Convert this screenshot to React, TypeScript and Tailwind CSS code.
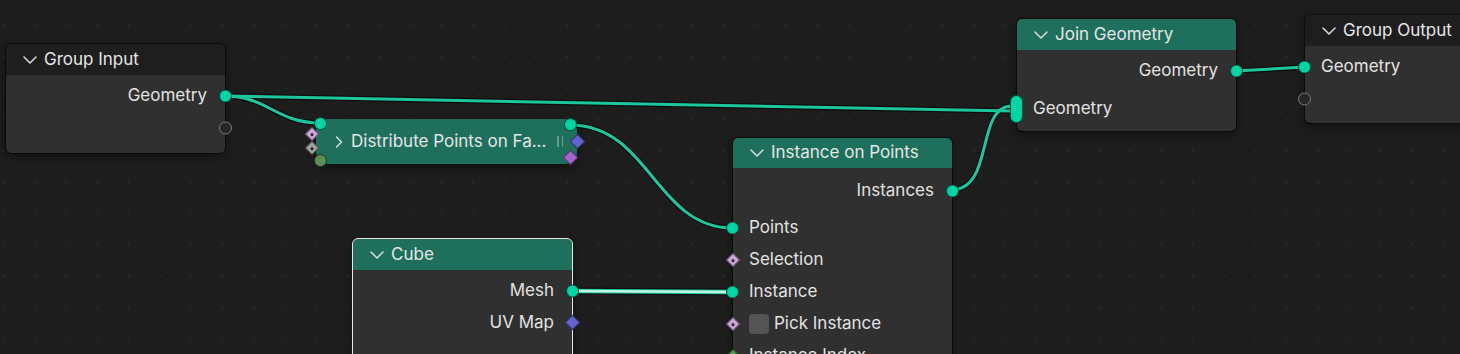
import type { ReactNode } from 'react';

const composeClasses = (...classes: Array<string | false | null | undefined>) => classes.filter(Boolean).join(' ');

const ChevronDown = () => (
  <svg width="14" height="8" viewBox="0 0 14 8" className="shrink-0">
    <path d="M1 1l6 6 6-6" fill="none" stroke="#dcdcdc" strokeWidth="1.5" strokeLinecap="round" strokeLinejoin="round" />
  </svg>
);

const ChevronRight = () => (
  <svg width="8" height="12" viewBox="0 0 8 12" className="shrink-0">
    <path d="M1.5 1l5 5-5 5" fill="none" stroke="#dcdcdc" strokeWidth="1.5" strokeLinecap="round" strokeLinejoin="round" />
  </svg>
);

const Header = ({ title, green }: { title: string; green?: boolean }) => (
  <div
    className={composeClasses(
      'flex h-[31px] items-center gap-[7px] rounded-t-[5px] pl-[17px] text-[17px] text-[#e6e6e6]',
      green ? 'bg-[#1e6f5c]' : 'bg-[#1e1e1e]'
    )}
  >
    <ChevronDown />
    <span>{title}</span>
  </div>
);

const Row = ({ children, right, className }: { children: ReactNode; right?: boolean; className?: string }) => (
  <div
    className={composeClasses(
      'relative flex h-[32px] items-center text-[17px] text-[#e2e2e2]',
      right ? 'justify-end pr-[18px]' : 'pl-[16px]',
      className
    )}
  >
    {children}
  </div>
);

// sockets sit on the node edge
const GeoIn = () => (
  <span className="absolute top-1/2 left-[-7px] h-[13px] w-[13px] -translate-y-1/2 rounded-full border border-black/60 bg-[#00d6a3]" />
);
const GeoOut = () => (
  <span className="absolute top-1/2 right-[-7px] h-[13px] w-[13px] -translate-y-1/2 rounded-full border border-black/60 bg-[#00d6a3]" />
);
const EmptyIn = () => (
  <span className="absolute top-1/2 left-[-7px] h-[13px] w-[13px] -translate-y-1/2 rounded-full border border-[#7c7c7c] bg-[#262626]" />
);
const EmptyOut = () => (
  <span className="absolute top-1/2 right-[-7px] h-[13px] w-[13px] -translate-y-1/2 rounded-full border border-[#7c7c7c] bg-[#262626]" />
);
const FieldIn = ({ color }: { color: string }) => (
  <span
    className={composeClasses(
      'absolute top-[11px] left-[-5px] flex h-[10px] w-[10px] rotate-45 items-center justify-center border border-black/50',
      color
    )}
  >
    <span className="h-[3px] w-[3px] rounded-full bg-black/80" />
  </span>
);

const Node = ({ className, children, selected }: { className: string; children: ReactNode; selected?: boolean }) => (
  <div
    className={composeClasses(
      'absolute w-[219px] rounded-[5px] bg-[#303030] shadow-[0_3px_8px_rgba(0,0,0,0.5)]',
      selected ? 'outline outline-1 outline-[#e8e8e8]' : 'outline outline-1 outline-black/50',
      className
    )}
  >
    {children}
  </div>
);

const linkPaths = [
  'M224 96 C 320 96 920 111 1012 111',
  'M224 96 C 268 96 276 123 320 123',
  'M570 125 C 650 125 655 228 733 228',
  'M951 190 C 995 190 975 106 1012 106',
  'M1235 71 L 1305 67',
];

const Links = () => (
  <svg className="absolute top-0 left-0" width="1460" height="354" viewBox="0 0 1460 354" fill="none">
    <g stroke="#000" strokeOpacity="0.55" strokeWidth="5.5" strokeLinecap="round">
      {linkPaths.map(d => (
        <path key={d} d={d} />
      ))}
      <path d="M571 291 L 733 292" strokeWidth="7" />
    </g>
    <g stroke="#1dc79d" strokeWidth="3" strokeLinecap="round">
      {linkPaths.map(d => (
        <path key={d} d={d} />
      ))}
      <path d="M571 291 L 733 292" strokeWidth="4.5" />
    </g>
    {/* highlighted link of the selected Cube node */}
    <path d="M571 291 L 733 292" stroke="#bff5e4" strokeWidth="2.5" strokeLinecap="round" />
  </svg>
);

const App = () => {
  return (
    <div className="relative h-[354px] w-[1460px] overflow-hidden bg-[#1d1d1d] bg-[radial-gradient(circle,#282828_1.1px,transparent_1.6px)] bg-[length:31.3px_31.3px] bg-[position:-12px_10px] font-['Inter',sans-serif] antialiased">
      <Links />

      <Node className="top-[44px] left-[6px]">
        <Header title="Group Input" />
        <div className="pt-[5px] pb-[9px]">
          <Row right>
            Geometry
            <GeoOut />
          </Row>
          <Row right>
            <EmptyOut />
          </Row>
        </div>
      </Node>

      {/* collapsed node */}
      <div className="absolute top-[119px] left-[316px] flex h-[45px] w-[261px] items-center rounded-[12px] bg-[#1e6f5c] pl-[19px] text-[17px] text-[#e6e6e6] shadow-[0_3px_8px_rgba(0,0,0,0.55)]">
        <ChevronRight />
        <span className="ml-[8px] whitespace-nowrap">Distribute Points on Fa...</span>
        <span className="mr-[14px] ml-auto flex gap-[3px]">
          <span className="h-[11px] w-[1.5px] bg-[#5f9e8d]" />
          <span className="h-[11px] w-[1.5px] bg-[#5f9e8d]" />
        </span>
        <span className="absolute top-[-2px] left-[-2px] h-[13px] w-[13px] rounded-full border border-black/60 bg-[#00d6a3]" />
        <span className="absolute top-[10px] left-[-9px] flex h-[10px] w-[10px] rotate-45 items-center justify-center border border-black/50 bg-[#cea6d8]">
          <span className="h-[3px] w-[3px] rounded-full bg-black/80" />
        </span>
        <span className="absolute top-[24px] left-[-9px] flex h-[10px] w-[10px] rotate-45 items-center justify-center border border-black/50 bg-[#a3a3a3]">
          <span className="h-[3px] w-[3px] rounded-full bg-black/80" />
        </span>
        <span className="absolute top-[35px] left-[-2px] h-[13px] w-[13px] rounded-full border border-black/60 bg-[#5a8f56]" />
        <span className="absolute top-[-1px] left-[248px] h-[13px] w-[13px] rounded-full border border-black/60 bg-[#00d6a3]" />
        <span className="absolute top-[17px] left-[256px] h-[11px] w-[11px] rotate-45 border border-black/50 bg-[#6464cc]" />
        <span className="absolute top-[33px] left-[249px] h-[11px] w-[11px] rotate-45 border border-black/50 bg-[#a565cf]" />
      </div>

      <Node className="top-[138px] left-[733px]">
        <div className="flex h-[30px] items-center gap-[7px] rounded-t-[5px] bg-[#1e6f5c] pl-[17px] text-[17px] text-[#e6e6e6]">
          <ChevronDown />
          <span>Instance on Points</span>
        </div>
        <div className="flex flex-col gap-[5px] pt-[7px] pb-[60px]">
          <Row right>
            Instances
            <GeoOut />
          </Row>
          <div>
            <Row>
              Points
              <GeoIn />
            </Row>
            <Row>
              Selection
              <FieldIn color="bg-[#cea6d8]" />
            </Row>
            <Row>
              Instance
              <GeoIn />
            </Row>
            <Row className="gap-[5px]">
              <span className="h-[20px] w-[20px] rounded-[4px] bg-[#545454]" />
              Pick Instance
              <FieldIn color="bg-[#cea6d8]" />
            </Row>
            <Row>
              Instance Index
              <span className="absolute top-[11px] left-[-5px] h-[10px] w-[10px] rotate-45 border border-black/50 bg-[#5c9a5a]" />
            </Row>
          </div>
        </div>
      </Node>

      <Node className="top-[239px] left-[353px]" selected>
        <Header title="Cube" green />
        <div className="pt-[5px] pb-[60px]">
          <Row right>
            Mesh
            <GeoOut />
          </Row>
          <Row right>
            UV Map
            <span className="absolute top-[10px] right-[-6px] h-[11px] w-[11px] rotate-45 border border-black/50 bg-[#6464cc]" />
          </Row>
        </div>
      </Node>

      <Node className="top-[19px] left-[1017px]">
        <Header title="Join Geometry" green />
        <div className="flex flex-col gap-[6px] pt-[5px] pb-[6px]">
          <Row right>
            Geometry
            <GeoOut />
          </Row>
          <Row>
            Geometry
            <span className="absolute top-1/2 left-[-7px] h-[28px] w-[13px] -translate-y-1/2 rounded-full border border-black/60 bg-[#00d6a3]" />
          </Row>
        </div>
      </Node>

      <Node className="top-[15px] left-[1305px]">
        <Header title="Group Output" />
        <div className="pt-[5px] pb-[8px]">
          <Row>
            Geometry
            <GeoIn />
          </Row>
          <Row>
            <EmptyIn />
          </Row>
        </div>
      </Node>
    </div>
  );
};

export default App;
